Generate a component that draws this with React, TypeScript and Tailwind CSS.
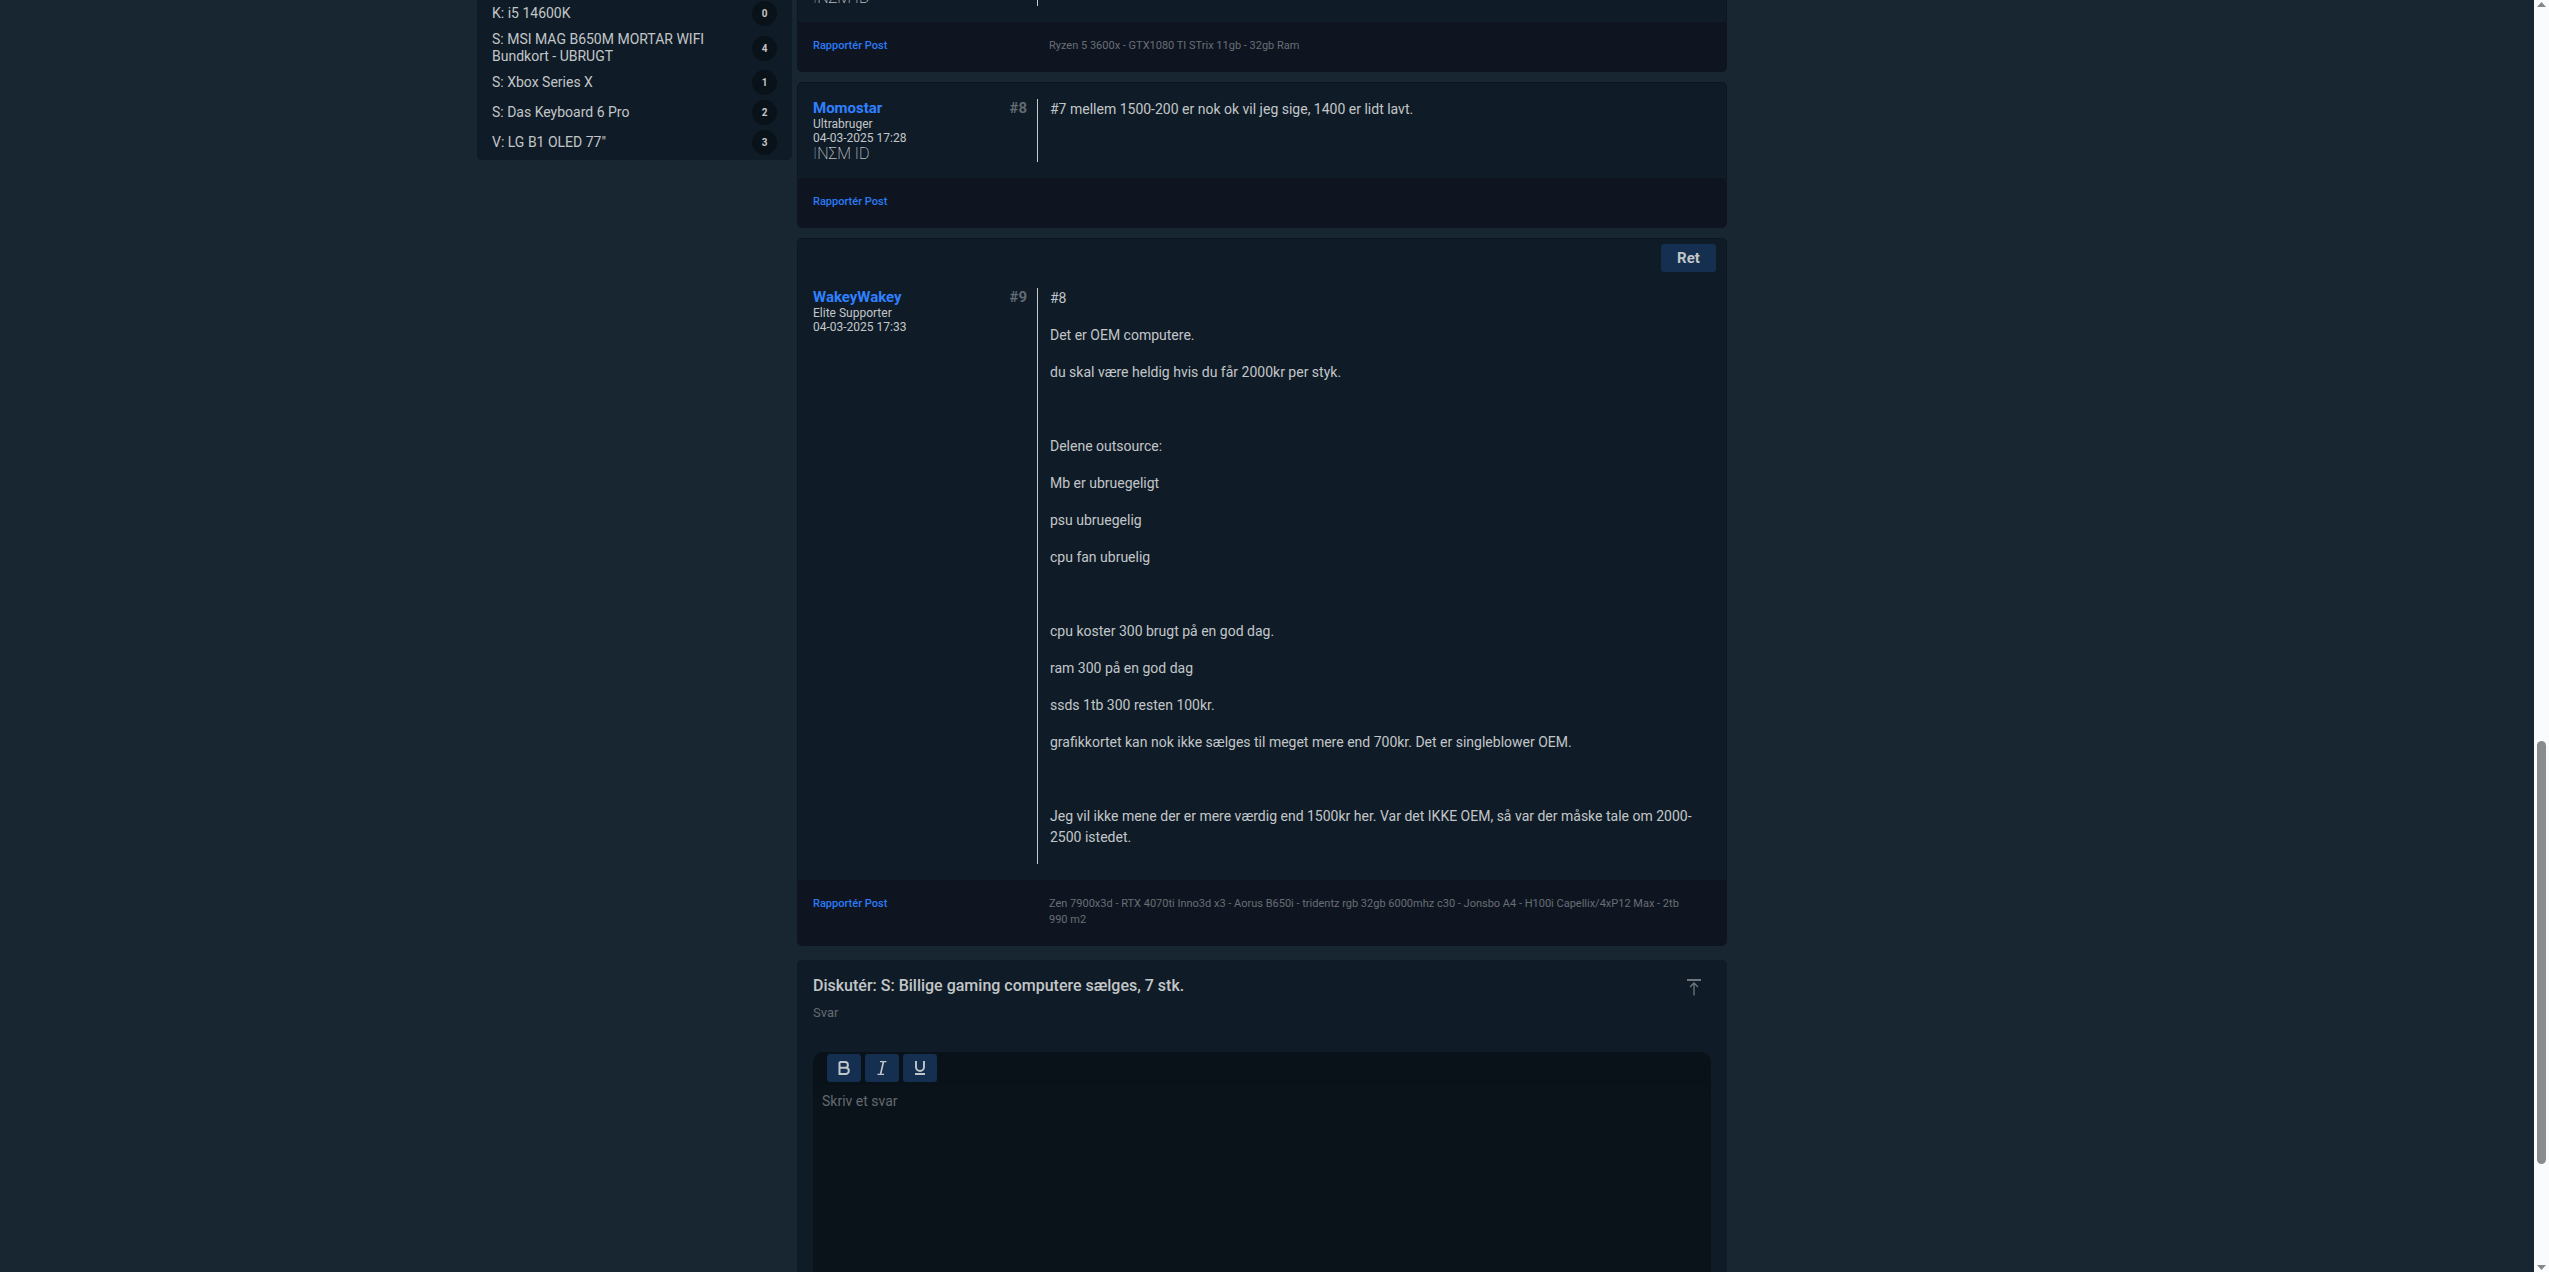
import React from 'react';

interface Thread {
  title: string;
  replies: number;
}

interface Post {
  id: number;
  author?: string;
  rank?: string;
  date?: string;
  verified?: boolean;
  editable?: boolean;
  paragraphs: string[];
  signature?: string;
}

const threads: Thread[] = [
  { title: 'K: i5 14600K', replies: 0 },
  { title: 'S: MSI MAG B650M MORTAR WIFI Bundkort - UBRUGT', replies: 4 },
  { title: 'S: Xbox Series X', replies: 1 },
  { title: 'S: Das Keyboard 6 Pro', replies: 2 },
  { title: 'V: LG B1 OLED 77"', replies: 3 },
];

const posts: Post[] = [
  {
    id: 8,
    author: 'Momostar',
    rank: 'Ultrabruger',
    date: '04-03-2025 17:28',
    verified: true,
    paragraphs: ['#7 mellem 1500-200 er nok ok vil jeg sige, 1400 er lidt lavt.'],
  },
  {
    id: 9,
    author: 'WakeyWakey',
    rank: 'Elite Supporter',
    date: '04-03-2025 17:33',
    editable: true,
    paragraphs: [
      '#8',
      'Det er OEM computere.',
      'du skal være heldig hvis du får 2000kr per styk.',
      '',
      'Delene outsource:',
      'Mb er ubruegeligt',
      'psu ubruegelig',
      'cpu fan ubruelig',
      '',
      'cpu koster 300 brugt på en god dag.',
      'ram 300 på en god dag',
      'ssds 1tb 300 resten 100kr.',
      'grafikkortet kan nok ikke sælges til meget mere end 700kr. Det er singleblower OEM.',
      '',
      'Jeg vil ikke mene der er mere værdig end 1500kr her. Var det IKKE OEM, så var der måske tale om 2000-2500 istedet.',
    ],
    signature:
      'Zen 7900x3d - RTX 4070ti Inno3d x3 - Aorus B650i - tridentz rgb 32gb 6000mhz c30 - Jonsbo A4 - H100i Capellix/4xP12 Max - 2tb 990 m2',
  },
];

const NemId: React.FC = () => (
  <div className="h-[17px] shrink-0 pt-px text-[16px] leading-4 font-thin text-white">
    <span className="text-[#8fc4e0]">I</span>NΣM ID
  </div>
);

const PostFooter: React.FC<{ signature?: string }> = ({ signature }) => (
  <div className="flex bg-[#0e1521] px-[15px] pt-4 pb-[17px] text-[11px] leading-4">
    <div className="w-[236px] shrink-0">
      <a href="#report" className="font-medium text-[#2b7bf6]">Rapportér Post</a>
    </div>
    <p className="min-h-4 flex-1 pr-5 text-[#696e74]">{signature}</p>
  </div>
);

const PostCard: React.FC<{ post: Post }> = ({ post }) => (
  <article className="overflow-hidden rounded-[5px] border border-[#0d1620] bg-[#0f1c27]">
    {post.editable && (
      <div className="flex justify-end px-[10px] pt-[5px]">
        <button className="h-7 w-[55px] rounded-[3px] bg-[#142f50] text-[15px] font-bold">Ret</button>
      </div>
    )}
    <div className="flex px-[15px] py-4">
      <div className="w-[224px] shrink-0 pr-[10px]">
        <div className="flex justify-between text-[15px] leading-[18px] font-bold">
          <a href="#profile" className="text-[#2f80ff]">{post.author}</a>
          <span className="text-[#626a72]">#{post.id}</span>
        </div>
        <div className="text-[12px] leading-[14px]">
          <div>{post.rank}</div>
          <div>{post.date}</div>
        </div>
        {post.verified && <NemId />}
      </div>
      <div className="flex-1 border-l border-[#c8ccd0] pr-[15px] pl-3 text-[14px] leading-[21px]">
        {post.paragraphs.map((text, index) => (
          <p key={index} className="mb-4 min-h-[21px]">{text}</p>
        ))}
      </div>
    </div>
    <PostFooter signature={post.signature} />
  </article>
);

const Sidebar: React.FC = () => (
  <aside className="w-[315px] shrink-0 self-start rounded-b-[5px] bg-[#0f1c27] px-[15px] pt-px pb-[5px]">
    <ul className="flex flex-col gap-[5px]">
      {threads.map((thread) => (
        <li key={thread.title} className="flex items-center justify-between">
          <a href="#thread" className="w-[240px] text-[14px] leading-[17px]">{thread.title}</a>
          <span className="flex size-[25px] items-center justify-center rounded-full bg-[#0a1219] text-[10px] font-bold">
            {thread.replies}
          </span>
        </li>
      ))}
    </ul>
  </aside>
);

const ToolButton: React.FC<{ label: string; children: React.ReactNode }> = ({ label, children }) => (
  <button aria-label={label} className="flex h-7 w-[34px] items-center justify-center rounded-[3px] bg-[#142f50]">
    <svg width="14" height="14" viewBox="0 0 14 14" fill="none" stroke="currentColor">
      {children}
    </svg>
  </button>
);

const ReplyForm: React.FC = () => (
  <section className="mt-1 flex flex-1 flex-col rounded-t-[5px] bg-[#0f1c27] px-4 pt-4">
    <div className="flex items-start justify-between pr-2">
      <h2 className="text-[16px] leading-5 font-medium">Diskutér: S: Billige gaming computere sælges, 7 stk.</h2>
      <button aria-label="Til toppen" className="pt-[3px] text-[#6f767d]">
        <svg width="18" height="18" viewBox="0 0 18 18" fill="none" stroke="currentColor" strokeWidth="1.3">
          <path d="M2 1h14" strokeWidth="2" />
          <path d="M9 16.500V4M5 8l4-4 4 4" />
        </svg>
      </button>
    </div>
    <label htmlFor="reply" className="mt-2 text-[13px] leading-4 text-[#646a70]">Svar</label>
    <div className="mt-[31px] flex flex-1 flex-col rounded-t-[10px] bg-[#091119]">
      <div className="flex gap-1 px-[14px] pt-[2px] pb-[3px]">
        <ToolButton label="Fed">
          <path d="M2.500 1h5.500a2.800 2.800 0 0 1 0 5.800H2.500M2.500 6.800h6.200a3.100 3.100 0 0 1 0 6.200H2.500V1" strokeWidth="2" />
        </ToolButton>
        <ToolButton label="Kursiv">
          <path d="M5 .6h6.500M2.500 13.400H9" strokeWidth="1.2" />
          <path d="M8.500.6L5.500 13.400" strokeWidth="1.7" />
        </ToolButton>
        <ToolButton label="Understreget">
          <path d="M3 0v6a4 4 0 0 0 8 0V0M2 13h10" strokeWidth="1.900" />
        </ToolButton>
      </div>
      <textarea
        id="reply"
        placeholder="Skriv et svar"
        className="w-full flex-1 resize-none rounded-t-[10px] bg-[#0a121a] px-[9px] pt-[6px] text-[14px] leading-[21px] placeholder:text-[#646a70] focus:outline-none"
      />
    </div>
  </section>
);

const Scrollbar: React.FC = () => (
  <div className="flex w-[15px] shrink-0 flex-col items-center bg-[#fafbfd] py-[2px] text-[#858789]">
    <svg width="9" height="5" viewBox="0 0 9 5" fill="currentColor"><path d="M0 5L4.500 0L9 5z" /></svg>
    <div className="grow-[733]" />
    <div className="w-[9px] grow-[423] rounded-full bg-[#8a8b8d]" />
    <div className="grow-[101]" />
    <svg width="9" height="5" viewBox="0 0 9 5" fill="currentColor"><path d="M0 0L4.500 5L9 0z" /></svg>
  </div>
);

export default function App() {
  return (
    <div className="flex h-screen overflow-hidden bg-[#182632] font-['Roboto',sans-serif] text-[#c3c6c9]">
      <div className="flex flex-1 justify-center">
        <div className="flex w-full max-w-[1580px] gap-[5px]">
          <Sidebar />
          <main className="flex w-[930px] shrink-0 flex-col gap-[10px]">
            {/* tail end of the previous post */}
            <article className="overflow-hidden rounded-b-[5px] border-x border-b border-[#0d1620] bg-[#0f1c27]">
              <div className="flex px-[15px] pb-4">
                <div className="flex h-[6px] w-[224px] shrink-0 flex-col justify-end overflow-hidden">
                  <NemId />
                </div>
                <div className="flex-1 border-l border-[#c8ccd0]" />
              </div>
              <PostFooter signature="Ryzen 5 3600x - GTX1080 TI STrix 11gb - 32gb Ram" />
            </article>
            {posts.map((post) => (
              <PostCard key={post.id} post={post} />
            ))}
            <ReplyForm />
          </main>
        </div>
      </div>
      <Scrollbar />
    </div>
  );
}
